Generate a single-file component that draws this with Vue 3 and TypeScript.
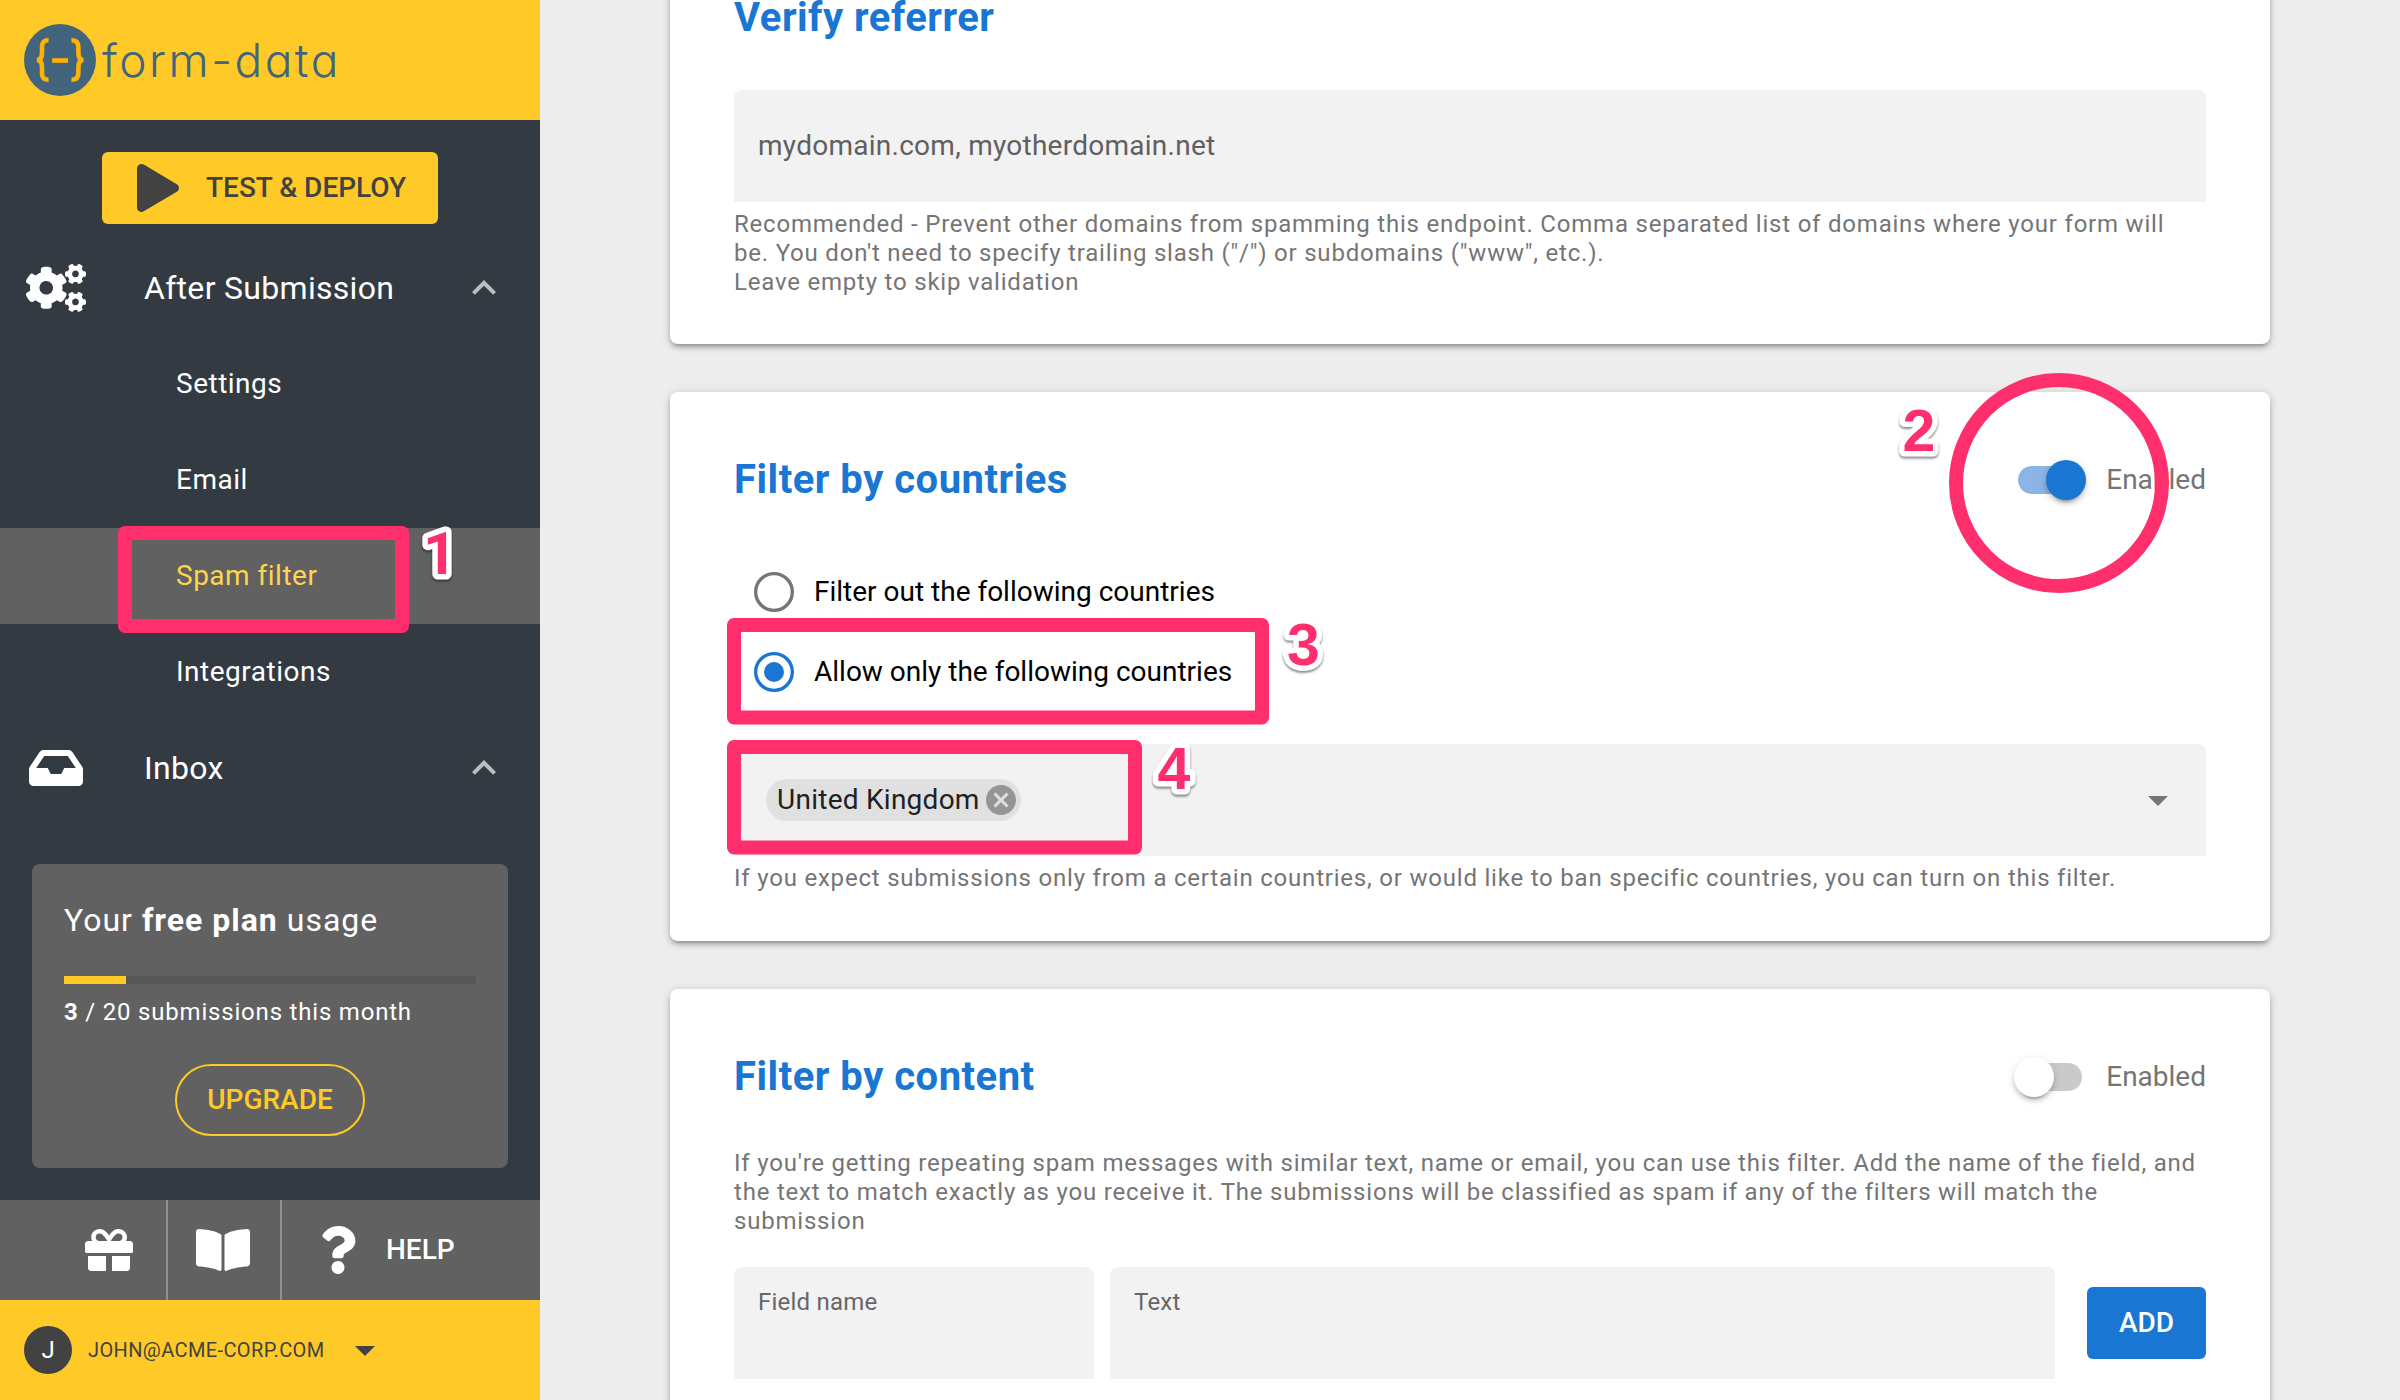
<script setup lang="ts">
interface SubItem {
  label: string
  active?: boolean
}

const subItems: SubItem[] = [
  { label: 'Settings' },
  { label: 'Email' },
  { label: 'Spam filter', active: true },
  { label: 'Integrations' },
]

const used = 3
const quota = 20
const usagePercent = (used / quota) * 100
</script>

<template>
  <div class="page">
    <aside class="sidebar">
      <header class="brand">
        <svg class="brand-mark" viewBox="0 0 72 72">
          <circle cx="36" cy="36" r="36" fill="#42647c" />
          <g fill="none" stroke="#ffb300" stroke-width="4.6">
            <path d="M24.6 16.2C19.6 16.2 18 18.500 18 23V29C18 33.500 16.600 36 12.800 36C16.600 36 18 38.500 18 43V49C18 53.500 19.600 55.800 24.600 55.800" />
            <path d="M47.400 16.200C52.400 16.200 54.400 18.500 54.400 23V29C54.400 33.500 55.800 36 59.600 36C55.800 36 54.400 38.500 54.400 43V49C54.400 53.500 52.400 55.800 47.400 55.800" />
            <path d="M28.200 36.500H44" />
          </g>
        </svg>
        <span class="brand-name">form-data</span>
      </header>

      <div class="deploy-row">
        <button class="btn deploy">
          <svg width="42" height="48" viewBox="0 0 448 512" fill="currentColor"><path d="M424.4 214.7L72.4 6.600C43.800-10.300 0 6.100 0 47.900V464c0 37.500 40.700 60.100 72.400 41.300l352-208c31.400-18.500 31.500-64.100 0-82.600z" /></svg>
          <span>TEST &amp; DEPLOY</span>
        </button>
      </div>

      <nav class="menu">
        <div class="menu-head">
          <span class="menu-icon">
            <svg width="60" height="48" viewBox="0 0 640 512" fill="currentColor"><path d="M512.1 191l-8.2 14.3c-3 5.3-9.4 7.5-15.1 5.4-11.8-4.4-22.6-10.7-32.1-18.6-4.6-3.8-5.8-10.5-2.8-15.7l8.2-14.3c-6.9-8-12.3-17.3-15.9-27.4h-16.5c-6 0-11.2-4.3-12.2-10.3-2-12-2.1-24.6 0-37.1 1-6 6.2-10.4 12.2-10.4h16.5c3.6-10.1 9-19.4 15.9-27.4l-8.2-14.3c-3-5.2-1.9-11.9 2.8-15.7 9.5-7.9 20.4-14.2 32.1-18.6 5.7-2.1 12.1.1 15.1 5.4l8.2 14.3c10.5-1.9 21.2-1.9 31.7 0L552 6.3c3-5.3 9.4-7.5 15.1-5.4 11.8 4.4 22.6 10.7 32.1 18.6 4.6 3.8 5.8 10.5 2.8 15.7l-8.2 14.3c6.9 8 12.3 17.3 15.9 27.4h16.5c6 0 11.2 4.3 12.2 10.3 2 12 2.1 24.6 0 37.1-1 6-6.2 10.4-12.2 10.4h-16.5c-3.6 10.1-9 19.4-15.9 27.4l8.2 14.3c3 5.2 1.9 11.9-2.8 15.7-9.5 7.9-20.4 14.2-32.1 18.6-5.7 2.1-12.1-.1-15.1-5.4l-8.2-14.3c-10.4 1.9-21.2 1.9-31.7 0zm-10.5-58.8c38.5 29.6 82.4-14.3 52.8-52.8-38.5-29.7-82.4 14.3-52.8 52.8zM386.3 286.1l33.7 16.8c10.1 5.8 14.5 18.1 10.5 29.1-8.9 24.2-26.4 46.4-42.6 65.8-7.4 8.9-20.2 11.1-30.3 5.3l-29.1-16.8c-16 13.7-34.6 24.6-54.9 31.7v33.6c0 11.6-8.3 21.6-19.7 23.6-24.6 4.2-50.4 4.4-75.9 0-11.5-2-20-11.9-20-23.6V418c-20.3-7.2-38.9-18-54.900-31.700L74 403c-10 5.800-22.900 3.600-30.300-5.300-16.200-19.400-33.300-41.600-42.200-65.700-4-10.900.4-23.200 10.500-29.100l33.300-16.800c-3.900-20.900-3.900-42.400 0-63.400L12 205.800c-10.100-5.800-14.600-18.100-10.500-29 8.900-24.200 26-46.400 42.200-65.800 7.400-8.900 20.200-11.100 30.300-5.300l29.100 16.800c16-13.700 34.600-24.600 54.900-31.700V57.100c0-11.500 8.200-21.500 19.600-23.500 24.600-4.200 50.500-4.400 76-.1 11.500 2 20 11.900 20 23.600v33.600c20.300 7.200 38.900 18 54.900 31.700l29.100-16.800c10-5.800 22.900-3.600 30.300 5.300 16.200 19.400 33.200 41.600 42.100 65.800 4 10.900.1 23.200-10 29.100l-33.700 16.800c3.900 21 3.900 42.500 0 63.500zm-117.600 21.100c59.200-77-28.700-164.900-105.700-105.700-59.200 77 28.700 164.900 105.700 105.700zm243.400 182.700l-8.200 14.300c-3 5.300-9.400 7.500-15.100 5.400-11.800-4.400-22.600-10.700-32.100-18.600-4.600-3.800-5.800-10.500-2.800-15.700l8.200-14.300c-6.900-8-12.300-17.300-15.900-27.400h-16.500c-6 0-11.200-4.300-12.200-10.300-2-12-2.100-24.600 0-37.100 1-6 6.200-10.400 12.200-10.400h16.500c3.600-10.100 9-19.400 15.900-27.400l-8.200-14.300c-3-5.200-1.900-11.900 2.800-15.700 9.500-7.900 20.400-14.200 32.100-18.600 5.700-2.100 12.100.1 15.100 5.400l8.200 14.300c10.500-1.900 21.200-1.900 31.700 0l8.200-14.300c3-5.300 9.400-7.500 15.100-5.400 11.800 4.400 22.600 10.700 32.100 18.600 4.600 3.800 5.800 10.500 2.800 15.700l-8.200 14.300c6.900 8 12.300 17.300 15.900 27.400h16.500c6 0 11.200 4.300 12.200 10.300 2 12 2.100 24.600 0 37.100-1 6-6.200 10.400-12.200 10.400h-16.500c-3.600 10.100-9 19.400-15.900 27.400l8.200 14.300c3 5.200 1.900 11.900-2.800 15.700-9.500 7.900-20.400 14.200-32.100 18.600-5.700 2.100-12.100-.1-15.100-5.400l-8.200-14.300c-10.400 1.900-21.200 1.900-31.700 0zM501.600 431c38.500 29.600 82.400-14.300 52.800-52.800-38.500-29.600-82.400 14.300-52.800 52.800z" /></svg>
          </span>
          <span class="menu-title">After Submission</span>
          <svg class="chevron" width="48" height="48" viewBox="0 0 24 24"><path d="M12 8l-6 6 1.410 1.410L12 10.830l4.590 4.580L18 14z" /></svg>
        </div>
        <a v-for="item in subItems" :key="item.label" class="sub-item" :class="{ active: item.active }">{{ item.label }}</a>
        <div class="menu-head">
          <span class="menu-icon">
            <svg width="54" height="48" viewBox="0 0 576 512" fill="currentColor"><path d="M567.938 243.908L462.250 85.374A48.003 48.003 0 0 0 422.311 64H153.689a48 48 0 0 0-39.938 21.374L8.062 243.908A47.994 47.994 0 0 0 0 270.533V400c0 26.510 21.490 48 48 48h480c26.510 0 48-21.490 48-48V270.533a47.994 47.994 0 0 0-8.062-26.625zM162.252 128h251.497l85.333 128H376l-32 64H232l-32-64H76.918l85.334-128z" /></svg>
          </span>
          <span class="menu-title">Inbox</span>
          <svg class="chevron" width="48" height="48" viewBox="0 0 24 24"><path d="M12 8l-6 6 1.410 1.410L12 10.830l4.590 4.580L18 14z" /></svg>
        </div>
      </nav>

      <section class="usage">
        <div class="usage-title">Your <b>free plan</b> usage</div>
        <div class="usage-bar"><div class="usage-fill" :style="{ width: usagePercent + '%' }"></div></div>
        <div class="usage-count"><b>{{ used }}</b> / {{ quota }} submissions this month</div>
        <button class="btn upgrade">UPGRADE</button>
      </section>

      <div class="tools">
        <a class="tool gift">
          <svg width="48" height="48" viewBox="0 0 512 512" fill="currentColor"><path d="M32 448c0 17.700 14.300 32 32 32h160V320H32v128zm256 32h160c17.700 0 32-14.300 32-32V320H288v160zm192-320h-42.100c6.200-12.100 10.100-25.500 10.100-40 0-48.500-39.500-88-88-88-41.600 0-68.500 21.300-103 68.300-34.500-47-61.400-68.300-103-68.300-48.500 0-88 39.500-88 88 0 14.500 3.800 27.900 10.100 40H32c-17.700 0-32 14.300-32 32v80c0 8.800 7.200 16 16 16h480c8.800 0 16-7.200 16-16v-80c0-17.700-14.300-32-32-32zm-326.100 0c-22.100 0-40-17.900-40-40s17.900-40 40-40c19.900 0 34.600 3.300 86.100 80h-86.100zm206.100 0h-86.100c51.400-76.500 65.700-80 86.100-80 22.100 0 40 17.900 40 40s-17.900 40-40 40z" /></svg>
        </a>
        <a class="tool book">
          <svg width="54" height="48" viewBox="0 0 576 512" fill="currentColor"><path d="M542.220 32.050c-54.800 3.110-163.720 14.430-230.960 55.590-4.640 2.840-7.270 7.890-7.270 13.170v363.870c0 11.550 12.630 18.850 23.280 13.490 69.180-34.820 169.230-44.320 218.700-46.920 16.890-.89 30.020-14.430 30.020-30.660V62.750c.01-17.710-15.350-31.740-33.770-30.700zM264.730 87.640C197.500 46.480 88.580 35.170 33.780 32.050 15.360 31.010 0 45.040 0 62.750V400.600c0 16.240 13.130 29.780 30.020 30.660 49.490 2.600 149.590 12.110 218.770 46.950 10.620 5.350 23.210-1.940 23.210-13.460V100.630c0-5.290-2.620-10.140-7.270-12.990z" /></svg>
        </a>
        <a class="tool help">
          <svg width="36" height="48" viewBox="0 0 384 512" fill="currentColor"><path d="M202.021 0C122.202 0 70.503 32.703 29.914 91.026c-7.363 10.580-5.093 25.086 5.178 32.874l43.138 32.709c10.373 7.865 25.132 6.026 33.253-4.148 25.049-31.381 43.630-49.449 82.757-49.449 30.764 0 68.816 19.799 68.816 49.631 0 22.552-18.617 34.134-48.993 51.164-35.423 19.860-82.299 44.576-82.299 106.405V320c0 13.255 10.745 24 24 24h72.471c13.255 0 24-10.745 24-24v-5.773c0-42.860 125.268-44.645 125.268-160.627C377.504 66.256 286.902 0 202.021 0zM192 373.459c-38.196 0-69.271 31.075-69.271 69.271 0 38.195 31.075 69.270 69.271 69.270s69.271-31.075 69.271-69.271-31.075-69.270-69.271-69.270z" /></svg>
          <span>HELP</span>
        </a>
      </div>

      <footer class="account">
        <span class="avatar">J</span>
        <span class="account-mail">JOHN@ACME-CORP.COM</span>
        <svg width="48" height="48" viewBox="0 0 24 24" fill="currentColor"><path d="M7 10l5 5 5-5z" /></svg>
      </footer>
    </aside>

    <main class="content">
      <section class="card">
        <div class="card-head"><h2>Verify referrer</h2></div>
        <div class="field"><span class="placeholder">mydomain.com, myotherdomain.net</span></div>
        <p class="hint">Recommended - Prevent other domains from spamming this endpoint. Comma separated list of domains where your form will<br>be. You don't need to specify trailing slash ("/") or subdomains ("www", etc.).<br>Leave empty to skip validation</p>
      </section>

      <section class="card countries">
        <div class="card-head">
          <h2>Filter by countries</h2>
          <label class="toggle on"><span class="track"><span class="thumb"></span></span><span>Enabled</span></label>
        </div>
        <div class="radios">
          <label class="radio">
            <svg width="40" height="40" viewBox="0 0 40 40"><circle cx="20" cy="20" r="18.330" fill="none" stroke="#757575" stroke-width="3.340" /></svg>
            <span>Filter out the following countries</span>
          </label>
          <label class="radio">
            <svg width="40" height="40" viewBox="0 0 40 40"><circle cx="20" cy="20" r="18.330" fill="none" stroke="#1976d2" stroke-width="3.340" /><circle cx="20" cy="20" r="10" fill="#1976d2" /></svg>
            <span>Allow only the following countries</span>
          </label>
        </div>
        <div class="field select">
          <span class="chip">
            <span>United Kingdom</span>
            <svg width="36" height="36" viewBox="0 0 24 24"><path d="M12 2C6.470 2 2 6.470 2 12s4.470 10 10 10 10-4.470 10-10S17.530 2 12 2zm5 13.590L15.590 17 12 13.410 8.410 17 7 15.590 10.590 12 7 8.410 8.410 7 12 10.590 15.590 7 17 8.410 13.410 12 17 15.590z" /></svg>
          </span>
          <svg class="caret" width="48" height="48" viewBox="0 0 24 24"><path d="M7 10l5 5 5-5z" /></svg>
        </div>
        <p class="hint">If you expect submissions only from a certain countries, or would like to ban specific countries, you can turn on this filter.</p>
      </section>

      <section class="card">
        <div class="card-head">
          <h2>Filter by content</h2>
          <label class="toggle"><span class="track"><span class="thumb"></span></span><span>Enabled</span></label>
        </div>
        <p class="hint intro">If you're getting repeating spam messages with similar text, name or email, you can use this filter. Add the name of the field, and<br>the text to match exactly as you receive it. The submissions will be classified as spam if any of the filters will match the<br>submission</p>
        <div class="rule-row">
          <div class="field rule-name"><span class="label">Field name</span></div>
          <div class="field rule-text"><span class="label">Text</span></div>
          <button class="btn add">ADD</button>
        </div>
      </section>
    </main>

    <!-- Step annotations drawn over the interface -->
    <svg class="steps" width="2400" height="1400" viewBox="0 0 2400 1400">
      <g fill="none" stroke="#ff2e6c" stroke-width="14" stroke-linejoin="round">
        <rect x="125" y="533" width="277" height="93" />
        <circle cx="2059" cy="483" r="103" />
        <rect x="734" y="625" width="528" height="92.500" />
        <rect x="734" y="747" width="401" height="100.500" />
      </g>
      <g class="step-numbers">
        <text class="one" x="423" y="574">1</text>
        <text x="1902.500" y="451">2</text>
        <text x="1287" y="665">3</text>
        <text x="1157.500" y="789">4</text>
      </g>
    </svg>
  </div>
</template>

<style>
body {
  margin: 0;
}
</style>

<style scoped>
.page {
  position: relative;
  display: flex;
  width: 2400px;
  height: 1400px;
  overflow: hidden;
  background: #ededed;
  font-family: Roboto, "Liberation Sans", sans-serif;
  font-size: 28px;
  line-height: 42px;
  color: #000;
}
svg {
  display: block;
  flex: none;
}
.sidebar {
  flex: none;
  display: flex;
  flex-direction: column;
  width: 540px;
  background: #343a42;
  color: #fff;
}
.brand {
  display: flex;
  align-items: center;
  height: 120px;
  padding-left: 24px;
  background: #ffca28;
  box-sizing: border-box;
}
.brand-mark {
  width: 72px;
  height: 72px;
}
.brand-name {
  margin-left: 6px;
  font: 300 46px/60px Inter, sans-serif;
  font-feature-settings: "cv11" 1;
  letter-spacing: 2.5px;
  white-space: nowrap;
  color: #42647c;
}
.btn {
  display: flex;
  align-items: center;
  justify-content: center;
  height: 72px;
  padding: 0 32px;
  border: 0;
  border-radius: 6px;
  box-sizing: border-box;
  font: 500 28px/48px Roboto, sans-serif;
  white-space: nowrap;
}
.deploy-row {
  display: flex;
  justify-content: center;
  padding: 32px 0 16px;
}
.deploy {
  width: 336px;
  gap: 27px;
  justify-content: flex-start;
  padding-left: 35px;
  background: #ffca28;
  color: #424242;
}
.menu {
  display: flex;
  flex-direction: column;
}
.menu-head {
  display: flex;
  align-items: center;
  height: 96px;
  padding: 0 32px 0 0;
}
.menu-icon {
  display: flex;
  justify-content: center;
  width: 112px;
  margin-right: 32px;
}
.menu-title {
  flex: 1;
  font-size: 32px;
  letter-spacing: 0.3px;
}
.chevron {
  fill: #bcbec0;
}
.sub-item {
  height: 96px;
  line-height: 96px;
  padding-left: 176px;
  letter-spacing: 0.5px;
}
.sub-item.active {
  background: #616161;
  color: #ffd54f;
}
.usage {
  display: flex;
  flex-direction: column;
  height: 304px;
  margin: 48px 32px 32px;
  padding: 32px;
  border-radius: 8px;
  box-sizing: border-box;
  background: #616161;
}
.usage-title {
  font-size: 32px;
  line-height: 48px;
  letter-spacing: 1px;
}
.usage-bar {
  height: 8px;
  margin-top: 32px;
  background: #575757;
}
.usage-fill {
  height: 8px;
  background: #ffca28;
}
.usage-count {
  margin-top: 8px;
  font-size: 24px;
  line-height: 40px;
  letter-spacing: 0.8px;
}
.upgrade {
  width: 190px;
  margin: 32px auto 0;
  border: 2px solid #ffca28;
  border-radius: 36px;
  padding: 0;
  background: transparent;
  color: #ffca28;
}
.tools {
  display: flex;
  height: 100px;
  background: #616161;
}
.tool {
  display: flex;
  align-items: center;
  font-weight: 500;
}
.gift {
  width: 168px;
  padding-left: 85px;
  border-right: 2px solid #909090;
  box-sizing: border-box;
}
.book {
  width: 114px;
  padding-left: 28px;
  border-right: 2px solid #909090;
  box-sizing: border-box;
}
.help {
  gap: 30px;
  padding-left: 38px;
}
.account {
  display: flex;
  align-items: center;
  flex: 1;
  padding-left: 24px;
  background: #ffca28;
  color: #424242;
}
.avatar {
  width: 48px;
  height: 48px;
  border-radius: 50%;
  background: #424242;
  color: #fff;
  font-size: 24px;
  line-height: 48px;
  text-align: center;
}
.account-mail {
  width: 236px;
  margin: 0 17px 0 16px;
  font-size: 20px;
  letter-spacing: 0.38px;
  white-space: nowrap;
}
.content {
  display: flex;
  flex-direction: column;
  gap: 48px;
  width: 1600px;
  margin: -70px 0 0 130px;
}
.card {
  flex: none;
  height: 414px;
  padding: 56px 64px 0;
  border-radius: 8px;
  box-sizing: border-box;
  background: #fff;
  box-shadow: 0 2px 10px rgba(0, 0, 0, 0.2), 0 4px 4px rgba(0, 0, 0, 0.14), 0 6px 2px -4px rgba(0, 0, 0, 0.12);
}
.card.countries {
  height: 549px;
}
.card:last-child {
  height: 480px;
}
.card-head {
  display: flex;
  justify-content: space-between;
  align-items: center;
  height: 64px;
}
h2 {
  margin: 0;
  font-size: 40px;
  font-weight: 700;
  line-height: 64px;
  letter-spacing: 0.5px;
  color: #1976d2;
}
.toggle {
  display: flex;
  align-items: center;
  color: #757575;
}
.track {
  position: relative;
  width: 64px;
  height: 28px;
  margin-right: 24px;
  border-radius: 14px;
  background: #cacaca;
}
.thumb {
  position: absolute;
  left: -4px;
  top: -6px;
  width: 40px;
  height: 40px;
  border-radius: 50%;
  background: #fff;
  box-shadow: 0 6px 2px -4px rgba(0, 0, 0, 0.2), 0 4px 4px rgba(0, 0, 0, 0.14), 0 2px 10px rgba(0, 0, 0, 0.12);
}
.toggle.on .track {
  background: #8cb4e7;
}
.toggle.on .thumb {
  left: 28px;
  background: #1976d2;
}
.field {
  display: flex;
  align-items: center;
  height: 112px;
  padding: 0 24px;
  border-radius: 8px 8px 0 0;
  box-sizing: border-box;
  background: #f2f2f2;
  letter-spacing: 0.00937em;
}
.card-head + .field {
  margin-top: 40px;
}
.placeholder {
  color: #606060;
}
.hint {
  margin: 8px 0 0;
  font-size: 24px;
  line-height: 29px;
  letter-spacing: 0.79px;
  white-space: nowrap;
  color: #757575;
}
.radios {
  display: flex;
  flex-direction: column;
  padding: 40px 0 32px 20px;
}
.radio {
  display: flex;
  align-items: center;
  gap: 20px;
  height: 80px;
}
.select {
  justify-content: space-between;
  padding: 0 24px 0 32px;
}
.chip {
  display: flex;
  align-items: center;
  gap: 3px;
  height: 42px;
  padding: 0 2px 0 11px;
  border-radius: 21px;
  background: #e0e0e0;
  color: #212121;
}
.chip span {
  letter-spacing: 0.26px;
}
.chip svg {
  fill: #959595;
}
.caret {
  fill: #757575;
}
.hint.intro {
  margin-top: 40px;
}
.rule-row {
  display: flex;
  align-items: center;
  margin-top: 31px;
}
.rule-name {
  width: 360px;
  margin-right: 16px;
}
.rule-text {
  width: 945px;
  margin-right: 32px;
}
.label {
  align-self: flex-start;
  margin-top: 15px;
  font-size: 24px;
  line-height: 40px;
  letter-spacing: 0.22px;
  color: #666;
}
.add {
  width: 119px;
  background: #1976d2;
  color: #fff;
}
.steps {
  position: absolute;
  left: 0;
  top: 0;
}
.step-numbers text {
  font: 700 59px "Liberation Sans", Arial, sans-serif;
  fill: #ff2e6c;
  stroke: #fff;
  stroke-width: 11px;
  stroke-linejoin: round;
  paint-order: stroke;
  filter: drop-shadow(0 2px 1px rgba(0, 0, 0, 0.45));
}
.step-numbers .one {
  font-family: Roboto, sans-serif;
}
</style>
